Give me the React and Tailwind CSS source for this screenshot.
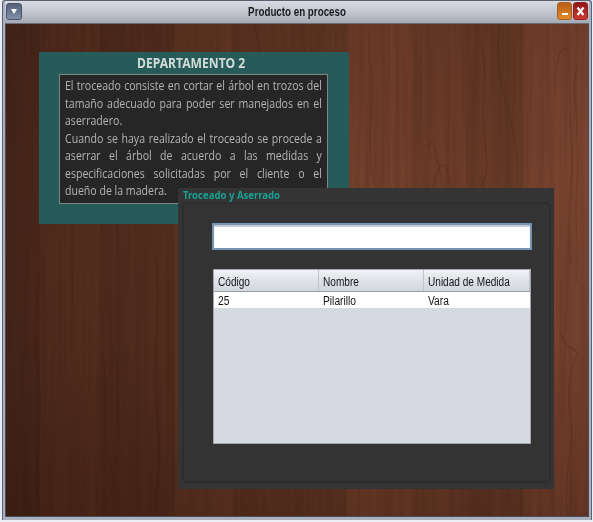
const planks = [
  [0, 34, "#000", 0.06], [34, 60, "#a0522d", 0.04], [94, 75, "#000", 0.05],
  [169, 58, "#b0653c", 0.05], [227, 60, "#000", 0.04], [287, 55, "#000", 0.08],
  [342, 63, "#b46a48", 0.06], [405, 55, "#000", 0.03], [460, 58, "#1a0d00", 0.13],
  [518, 65, "#b46a48", 0.03],
];

const grain = [
  "M30 250 C34 290 24 310 32 350 S26 420 33 493",
  "M96 330 C106 370 92 400 104 440 S94 470 98 493",
  "M150 230 C156 280 146 330 152 400 S146 460 150 493",
  "M250 0 C246 10 258 20 254 28",
  "M60 0 C66 10 58 20 62 28",
  "M366 40 C370 80 360 110 368 160",
  "M423 125 C428 100 434 150 438 165 M428 165 C436 120 444 150 446 165",
  "M476 20 C484 50 474 80 480 120 S474 160 478 164",
  "M494 0 C490 40 496 60 504 90 S512 130 512 164",
  "M550 70 C548 40 556 22 561 25 C568 26 562 60 566 110 S560 190 566 240",
  "M572 40 C566 70 576 110 572 160 S576 220 571 260",
  "M556 310 C562 330 570 322 572 330 C562 360 562 370 566 400 S558 440 562 493",
];

function Wood() {
  return (
    <svg className="absolute inset-0 h-full w-full" viewBox="0 0 583 493" preserveAspectRatio="none" aria-hidden="true">
      <defs>
        <linearGradient id="base" x1="0" x2="1" y1="0" y2="0">
          <stop offset="0" stopColor="#4b291c" />
          <stop offset="0.3" stopColor="#5b3322" />
          <stop offset="0.56" stopColor="#6e3e2a" />
          <stop offset="0.8" stopColor="#73412d" />
          <stop offset="1" stopColor="#7a4631" />
        </linearGradient>
        <linearGradient id="shade" x1="0" x2="0" y1="0" y2="1">
          <stop offset="0" stopColor="#220c04" stopOpacity="0.12" />
          <stop offset="0.3" stopColor="#220c04" stopOpacity="0" />
          <stop offset="0.65" stopColor="#220c04" stopOpacity="0.06" />
          <stop offset="1" stopColor="#220c04" stopOpacity="0.26" />
        </linearGradient>
        <filter id="fibres" x="0" y="0" width="100%" height="100%" colorInterpolationFilters="sRGB">
          <feTurbulence type="fractalNoise" baseFrequency="0.2 0.005" numOctaves="3" seed="8" />
          <feColorMatrix values="0 0 0 0 0.14  0 0 0 0 0.06  0 0 0 0 0.03  1 0 0 0 -0.3" />
        </filter>
      </defs>
      <rect width="583" height="493" fill="url(#base)" />
      {planks.map(([x, w, fill, o]) => (
        <rect key={x} x={x} width={w} height="493" fill={fill} opacity={o} />
      ))}
      <rect width="583" height="493" filter="url(#fibres)" opacity="0.28" />
      {grain.map((d) => (
        <path key={d} d={d} fill="none" stroke="#2c1208" strokeWidth="1.2" opacity="0.16" />
      ))}
      <rect width="583" height="493" fill="url(#shade)" />
    </svg>
  );
}

const lines = [
  ["El troceado consiste en cortar el árbol en trozos del", true],
  ["tamaño adecuado para poder ser manejados en el", true],
  ["aserradero.", false],
  ["Cuando se haya realizado el troceado se procede a", true],
  ["aserrar el árbol de acuerdo a las medidas y", true],
  ["especificaciones solicitadas por el cliente o el", true],
  ["dueño de la madera.", false],
];

function Department() {
  return (
    <section className="relative ml-[33px] mt-[28px] h-[172px] w-[310px] bg-[#265b59] pl-[20px]">
      <h2 className="flex h-[22px] items-center pl-[78px] font-['Noto_Sans',sans-serif] text-[13.5px] font-bold text-[#d3dbd8]">
        <span className="origin-left scale-x-[0.9] whitespace-nowrap">DEPARTAMENTO 2</span>
      </h2>
      <div className="h-[130px] w-[269px] border border-[#7d8784] bg-[#262626] pl-[5px] pt-[2px]">
        {lines.map(([text, full]) => (
          <p
            key={text}
            className={`h-[17.5px] w-[304px] origin-left scale-x-[0.845] whitespace-nowrap font-['Open_Sans',sans-serif] text-[12.5px] leading-[17.5px] text-[#b4b4b4] ${full ? "[text-align-last:justify]" : "text-left"}`}
          >
            {text}
          </p>
        ))}
      </div>
    </section>
  );
}

const headers = ["Código", "Nombre", "Unidad de Medida"];
const row = ["25", "Pilarillo", "Vara"];

function ProductPanel() {
  return (
    <section className="absolute left-[172px] top-[164px] flex h-[301px] w-[376px] flex-col bg-[#343434] pl-[4px]">
      <h3 className="h-[14px] pl-px font-['Noto_Sans',sans-serif] text-[10.5px] font-bold leading-[15px] text-[#18a294]">
        <span className="inline-block origin-left scale-x-[0.91] whitespace-nowrap">Troceado y Aserrado</span>
      </h3>
      <div className="h-[281px] w-[369px] rounded-[5px] border-2 border-[#2d2d2d] bg-[#333] pl-[28px] pt-[19px]">
        <input
          aria-label="Troceado y Aserrado"
          className="block h-[27px] w-[320px] border-2 border-[#7395b3] bg-white shadow-[inset_0_2px_1px_#c4c9d3] outline-none"
        />
        <div className="ml-px mt-[19px] h-[175px] w-[318px] border border-[#a3a6ac] bg-[#d6d9e1] font-['Liberation_Sans',Arial,sans-serif] text-[12px] text-[#151515]">
          <div className="grid h-[22px] grid-cols-[105px_105px_106px] border-b border-[#999ea7] bg-linear-to-b from-[#f1f2f5] via-[#dfe2e8] to-[#d3d6de]">
            {headers.map((h) => (
              <div key={h} className="flex items-center border-r border-[#bfc3cb] pl-[4px] pt-[2px]">
                <span className="origin-left scale-x-[0.84] whitespace-nowrap">{h}</span>
              </div>
            ))}
          </div>
          <div className="grid h-[16px] grid-cols-[105px_105px_106px] bg-white">
            {row.map((c) => (
              <div key={c} className="flex items-center pl-[4px]">
                <span className="origin-left scale-x-[0.855] whitespace-nowrap">{c}</span>
              </div>
            ))}
          </div>
        </div>
      </div>
    </section>
  );
}

function TitleBar() {
  return (
    <header className="flex h-[23px] items-center border-b border-[#686d78] bg-linear-to-b from-[#d9dbe1] via-[#c3c6ce] to-[#a5a9b3] pl-px pr-px">
      <button aria-label="Menú" className="mt-[-2px] flex h-[17px] w-[16px] items-center justify-center rounded-[3px] border border-[#46536a] bg-linear-to-b from-[#56627a] to-[#8090a5]">
        <svg width="6" height="5" viewBox="0 0 6 5"><path d="M0 0H6L3 5Z" fill="#fff" /></svg>
      </button>
      <h1 className="flex-1 pl-[15px] text-center font-['Liberation_Sans',Arial,sans-serif] text-[12px] font-bold leading-[20px] text-[#17191e]">
        <span className="inline-block scale-x-[0.815]">Producto en proceso</span>
      </h1>
      <div className="mt-[-2px] flex gap-px">
        <button aria-label="Minimizar" className="flex h-[18px] w-[15px] items-center justify-center rounded-[3px] border border-[#a5602c] bg-linear-to-b from-[#b95d13] to-[#e28b28]">
          <svg width="13" height="16" viewBox="0 0 13 16"><path d="M4 11H10" stroke="#fff" strokeWidth="2" /></svg>
        </button>
        <button aria-label="Cerrar" className="flex h-[18px] w-[15px] items-center justify-center rounded-[3px] border border-[#8d2426] bg-linear-to-b from-[#8f1517] to-[#ce3b31]">
          <svg width="13" height="16" viewBox="0 0 13 16"><path d="M3.5 4.5L9.5 12M9.5 4.5L3.5 12" stroke="#fff" strokeWidth="2.2" /></svg>
        </button>
      </div>
    </header>
  );
}

export default function App() {
  return (
    <div className="h-[522px] w-[593px] overflow-hidden bg-[#eceef3]">
      <div className="ml-[2px] flex h-[520px] w-[590px] flex-col rounded-t-[3px] border-l border-r border-t border-[#596273] bg-[#a9b1c1] px-[2px] pb-[3px]">
        <TitleBar />
        <main className="relative min-h-0 flex-1 border border-t-0 border-[#4d4a51] bg-[#5c3423]">
          <div className="absolute inset-0 overflow-hidden">
            <Wood />
          </div>
          <div className="flow-root">
            <Department />
          </div>
          <ProductPanel />
        </main>
      </div>
    </div>
  );
}
